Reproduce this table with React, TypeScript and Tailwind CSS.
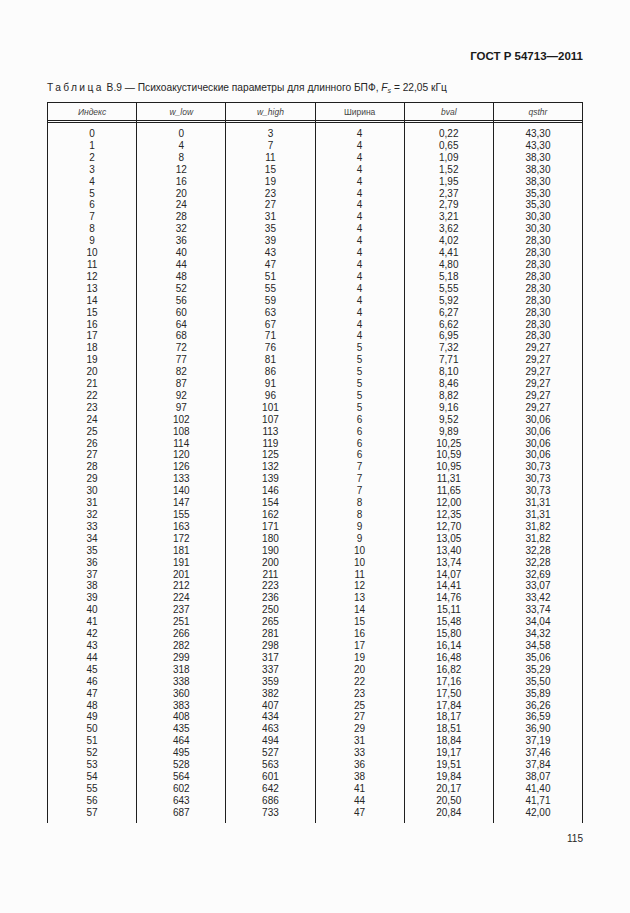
import React from "react";

const rows: string[][] = `0 0 3 4 0,22 43,30
1 4 7 4 0,65 43,30
2 8 11 4 1,09 38,30
3 12 15 4 1,52 38,30
4 16 19 4 1,95 38,30
5 20 23 4 2,37 35,30
6 24 27 4 2,79 35,30
7 28 31 4 3,21 30,30
8 32 35 4 3,62 30,30
9 36 39 4 4,02 28,30
10 40 43 4 4,41 28,30
11 44 47 4 4,80 28,30
12 48 51 4 5,18 28,30
13 52 55 4 5,55 28,30
14 56 59 4 5,92 28,30
15 60 63 4 6,27 28,30
16 64 67 4 6,62 28,30
17 68 71 4 6,95 28,30
18 72 76 5 7,32 29,27
19 77 81 5 7,71 29,27
20 82 86 5 8,10 29,27
21 87 91 5 8,46 29,27
22 92 96 5 8,82 29,27
23 97 101 5 9,16 29,27
24 102 107 6 9,52 30,06
25 108 113 6 9,89 30,06
26 114 119 6 10,25 30,06
27 120 125 6 10,59 30,06
28 126 132 7 10,95 30,73
29 133 139 7 11,31 30,73
30 140 146 7 11,65 30,73
31 147 154 8 12,00 31,31
32 155 162 8 12,35 31,31
33 163 171 9 12,70 31,82
34 172 180 9 13,05 31,82
35 181 190 10 13,40 32,28
36 191 200 10 13,74 32,28
37 201 211 11 14,07 32,69
38 212 223 12 14,41 33,07
39 224 236 13 14,76 33,42
40 237 250 14 15,11 33,74
41 251 265 15 15,48 34,04
42 266 281 16 15,80 34,32
43 282 298 17 16,14 34,58
44 299 317 19 16,48 35,06
45 318 337 20 16,82 35,29
46 338 359 22 17,16 35,50
47 360 382 23 17,50 35,89
48 383 407 25 17,84 36,26
49 408 434 27 18,17 36,59
50 435 463 29 18,51 36,90
51 464 494 31 18,84 37,19
52 495 527 33 19,17 37,46
53 528 563 36 19,51 37,84
54 564 601 38 19,84 38,07
55 602 642 41 20,17 41,40
56 643 686 44 20,50 41,71
57 687 733 47 20,84 42,00`
  .split("\n")
  .map((l) => l.trim().split(" "));

const headers: { label: string; italic: boolean }[] = [
  { label: "Индекс", italic: true },
  { label: "w_low", italic: true },
  { label: "w_high", italic: true },
  { label: "Ширина", italic: false },
  { label: "bval", italic: true },
  { label: "qsthr", italic: true },
];

export default function App() {
  return (
    <div className="w-[630px] h-[913px] bg-[#fcfcfc] text-[#262626] font-['Liberation_Sans',Arial,sans-serif] pl-[47px] pr-[47px] overflow-hidden">
      <div className="pt-[49px] text-right font-bold text-[11.5px] leading-[14px] text-[#1a1a1a]">
        ГОСТ Р 54713—2011
      </div>
      <div className="mt-[18px] text-[10.2px] leading-[13px] whitespace-nowrap">
        <span className="tracking-[2.4px]">Таблица</span> В.9 — Психоакустические параметры для длинного БПФ,{" "}
        <span className="italic">F</span>
        <sub className="italic text-[7px]">s</sub> = 22,05 кГц
      </div>
      <div className="mt-[8px] flex border-l border-t border-[#1f1f1f]">
        {headers.map((h, ci) => (
          <div key={ci} className="flex-1 flex flex-col border-r border-[#1f1f1f]">
            <div
              className={`h-[20px] flex items-center justify-center text-[8.5px] leading-[10px] text-[#444] border-b-[3px] border-double border-[#1f1f1f] ${
                h.italic ? "italic" : ""
              }`}
            >
              {h.label}
            </div>
            <div className="pt-[5px] pb-[4px] text-center text-[10px] leading-[11.9px]">
              {rows.map((r, ri) => (
                <div key={ri}>{r[ci]}</div>
              ))}
            </div>
          </div>
        ))}
      </div>
      <div className="mt-[10px] text-right text-[10px] leading-[12px]">115</div>
    </div>
  );
}
